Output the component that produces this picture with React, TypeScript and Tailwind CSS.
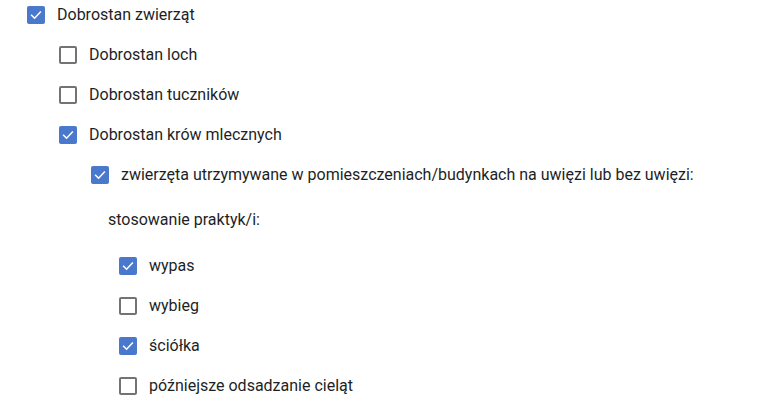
import { useState } from "react";

type Item = { id: string; label: string; indent: number; checked: boolean };

const initial: Item[] = [
  { id: "a", label: "Dobrostan zwierząt", indent: 27, checked: true },
  { id: "b", label: "Dobrostan loch", indent: 59, checked: false },
  { id: "c", label: "Dobrostan tuczników", indent: 59, checked: false },
  { id: "d", label: "Dobrostan krów mlecznych", indent: 59, checked: true },
  {
    id: "e",
    label:
      "zwierzęta utrzymywane w pomieszczeniach/budynkach na uwięzi lub bez uwięzi:",
    indent: 91,
    checked: true,
  },
];

const practices: Item[] = [
  { id: "f", label: "wypas", indent: 119, checked: true },
  { id: "g", label: "wybieg", indent: 119, checked: false },
  { id: "h", label: "ściółka", indent: 119, checked: true },
  { id: "i", label: "późniejsze odsadzanie cieląt", indent: 119, checked: false },
];

function Box({ checked }: { checked: boolean }) {
  if (checked) {
    return (
      <span className="flex h-[18px] w-[18px] shrink-0 items-center justify-center rounded-[2px] bg-[#4a78cc]">
        <svg width="14" height="14" viewBox="0 0 24 24" fill="none">
          <path
            d="M4.5 12.5l5 5L19.5 7"
            stroke="white"
            strokeWidth="2.6"
            strokeLinecap="square"
          />
        </svg>
      </span>
    );
  }
  return (
    <span className="h-[18px] w-[18px] shrink-0 rounded-[2px] border-2 border-[#737373] bg-white" />
  );
}

function Row({
  item,
  onToggle,
}: {
  item: Item;
  onToggle: (id: string) => void;
}) {
  return (
    <label
      className="flex h-[18px] cursor-pointer items-center gap-[12px] whitespace-nowrap"
      style={{ paddingLeft: item.indent }}
      onClick={() => onToggle(item.id)}
    >
      <Box checked={item.checked} />
      <span>{item.label}</span>
    </label>
  );
}

export default function App() {
  const [items, setItems] = useState([...initial, ...practices]);

  const toggle = (id: string) =>
    setItems((prev) =>
      prev.map((it) => (it.id === id ? { ...it, checked: !it.checked } : it))
    );

  const top = items.slice(0, 5);
  const bottom = items.slice(5);

  return (
    <div className="h-[405px] w-[757px] overflow-hidden bg-white pt-[6px] font-['Roboto',sans-serif] text-[16px] text-[#1e1f26]">
      <div className="flex flex-col gap-[22px]">
        {top.map((it) => (
          <Row key={it.id} item={it} onToggle={toggle} />
        ))}
        <div className="mt-[5px] mb-[6px] flex h-[18px] items-center pl-[108px]">
          stosowanie praktyk/i:
        </div>
        {bottom.map((it) => (
          <Row key={it.id} item={it} onToggle={toggle} />
        ))}
      </div>
    </div>
  );
}
